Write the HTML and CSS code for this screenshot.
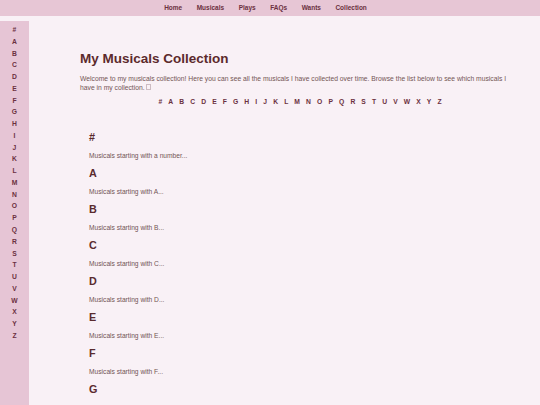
FILE: index.html
```html
<!DOCTYPE html>
<html lang="en">
<head>
<meta charset="utf-8">
<title>My Musicals Collection</title>
<link rel="stylesheet" href="styles.css">
</head>
<body>
<nav class="topnav">
  <a href="#">Home</a>
  <a href="#">Musicals</a>
  <a href="#">Plays</a>
  <a href="#">FAQs</a>
  <a href="#">Wants</a>
  <a href="#">Collection</a>
</nav>
<div class="layout">
  <aside class="sidebar">
    <a href="#num">#</a><a href="#A">A</a><a href="#B">B</a><a href="#C">C</a><a href="#D">D</a><a href="#E">E</a><a href="#F">F</a><a href="#G">G</a><a href="#H">H</a><a href="#I">I</a><a href="#J">J</a><a href="#K">K</a><a href="#L">L</a><a href="#M">M</a><a href="#N">N</a><a href="#O">O</a><a href="#P">P</a><a href="#Q">Q</a><a href="#R">R</a><a href="#S">S</a><a href="#T">T</a><a href="#U">U</a><a href="#V">V</a><a href="#W">W</a><a href="#X">X</a><a href="#Y">Y</a><a href="#Z">Z</a>
  </aside>
  <main class="main">
    <h1 class="title">My Musicals Collection</h1>
    <p class="intro">Welcome to my musicals collection! Here you can see all the musicals I have collected over time. Browse the list below to see which musicals I have in my collection. <span class="tofu"></span></p>
    <div class="letters">
      <a href="#num">#</a><a href="#A">A</a><a href="#B">B</a><a href="#C">C</a><a href="#D">D</a><a href="#E">E</a><a href="#F">F</a><a href="#G">G</a><a href="#H">H</a><a href="#I">I</a><a href="#J">J</a><a href="#K">K</a><a href="#L">L</a><a href="#M">M</a><a href="#N">N</a><a href="#O">O</a><a href="#P">P</a><a href="#Q">Q</a><a href="#R">R</a><a href="#S">S</a><a href="#T">T</a><a href="#U">U</a><a href="#V">V</a><a href="#W">W</a><a href="#X">X</a><a href="#Y">Y</a><a href="#Z">Z</a>
    </div>
    <div class="sections">
      <section class="group" id="num"><h2>#</h2><p>Musicals starting with a number...</p></section>
      <section class="group" id="A"><h2>A</h2><p>Musicals starting with A...</p></section>
      <section class="group" id="B"><h2>B</h2><p>Musicals starting with B...</p></section>
      <section class="group" id="C"><h2>C</h2><p>Musicals starting with C...</p></section>
      <section class="group" id="D"><h2>D</h2><p>Musicals starting with D...</p></section>
      <section class="group" id="E"><h2>E</h2><p>Musicals starting with E...</p></section>
      <section class="group" id="F"><h2>F</h2><p>Musicals starting with F...</p></section>
      <section class="group" id="G"><h2>G</h2><p>Musicals starting with G...</p></section>
      <section class="group" id="H"><h2>H</h2><p>Musicals starting with H...</p></section>
    </div>
  </main>
</div>
</body>
</html>
```
FILE: styles.css
```css
html, body {
  margin: 0;
  padding: 0;
}
body {
  background: #f9f1f6;
  font-family: "Liberation Sans", Arial, sans-serif;
  color: #735555;
}
a {
  text-decoration: none;
}
.topnav {
  height: 16px;
  background: #e7c6d5;
  display: flex;
  justify-content: center;
  align-items: center;
  gap: 14.5px;
  padding-right: 9px;
}
.topnav a {
  font-size: 6.5px;
  font-weight: bold;
  color: #6b3040;
  line-height: 8px;
}
.layout {
  display: flex;
  align-items: stretch;
}
.sidebar {
  width: 29px;
  flex: none;
  margin-top: 5px;
  background: #e6c5d5;
  display: flex;
  flex-direction: column;
  align-items: center;
  padding-top: 3px;
  min-height: 400px;
}
.sidebar a {
  font-size: 6.75px;
  font-weight: bold;
  color: #6b3040;
  line-height: 11.77px;
  height: 11.77px;
}
.main {
  flex: 1;
  padding: 35px 20px 0 51px;
}
.title {
  margin: 0 0 7px;
  font-size: 13.5px;
  line-height: 15.5px;
  font-weight: bold;
  color: #5c2a2c;
}
.intro {
  margin: 0;
  font-size: 6.75px;
  line-height: 9.2px;
  color: #735555;
}
.tofu {
  display: inline-block;
  width: 2.5px;
  height: 4px;
  border: 0.5px solid #cdbcc3;
  vertical-align: 0;
}
.letters {
  margin-top: 5px;
  display: flex;
  justify-content: center;
  line-height: 9px;
}
.letters a {
  font-size: 6.75px;
  font-weight: bold;
  color: #6b3040;
  padding: 0 3.05px;
}
.sections {
  margin-top: 25px;
  padding-left: 9px;
}
.group h2 {
  margin: 0 0 8.5px;
  font-size: 10.8px;
  line-height: 13px;
  font-weight: bold;
  color: #5a2b2e;
}
.group p {
  margin: 0 0 6.5px;
  font-size: 6.67px;
  line-height: 8px;
  color: #735555;
}
```
